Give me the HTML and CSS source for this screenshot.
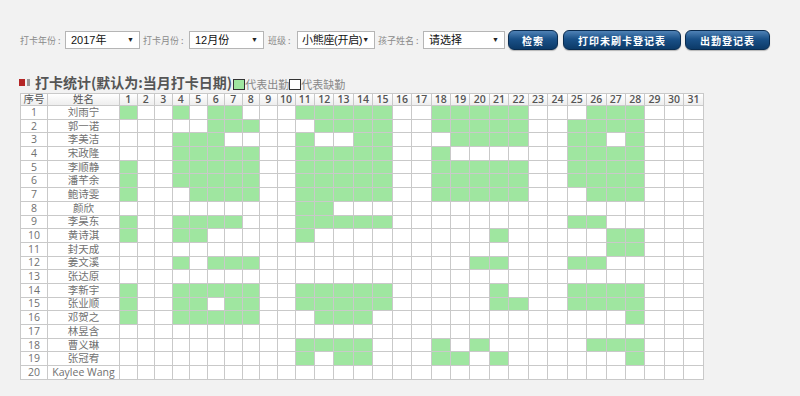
FILE: index.html
```html
<!DOCTYPE html>
<html lang="zh-CN">
<head>
    <meta charset="UTF-8">
    <title>打卡统计</title>
    <link rel="stylesheet" href="styles.css">
</head>
<body>

    <div class="toolbar">
        <label class="l-year">打卡年份 :</label>
        <div class="select w-year">2017年<span class="arrow">▼</span></div>
        <label class="l-month">打卡月份 :</label>
        <div class="select w-month">12月份<span class="arrow">▼</span></div>
        <label class="l-class">班级 :</label>
        <div class="select w-class">小熊座(开启)<span class="arrow">▼</span></div>
        <label class="l-child">孩子姓名 :</label>
        <div class="select w-child">请选择<span class="arrow">▼</span></div>
        <button class="btn b-search">检索</button>
        <button class="btn b-print">打印未刷卡登记表</button>
        <button class="btn b-list">出勤登记表</button>
    </div>

    <div class="title-bar">
        <span class="mark"></span>
        <h2>打卡统计(默认为:当月打卡日期)</h2>
        <span class="legend"><i class="box on"></i>代表出勤<i class="box"></i>代表缺勤</span>
    </div>

    <table class="grid" id="grid"></table>

    <script>
        const students = [
            { name: "刘雨宁", days: [1,4,6,7,11,12,13,14,15,18,19,20,21,22,26,27,28] },
            { name: "郭一诺", days: [6,7,8,12,13,14,15,18,19,20,21,22,25,26,27,28] },
            { name: "李美洁", days: [4,5,6,11,14,15,19,20,21,22,25,26,28] },
            { name: "宋政隆", days: [4,5,6,7,8,11,12,13,14,15,18,25,26,27,28] },
            { name: "李顺静", days: [1,4,5,6,7,8,11,12,13,14,15,18,19,20,21,22,25,26,27,28] },
            { name: "潘芊余", days: [1,4,5,6,7,8,11,12,13,14,15,18,19,20,21,22,25,26,27,28] },
            { name: "鲍诗雯", days: [1,5,6,7,8,11,12,13,14,15,18,19,20,21,22,26,27,28] },
            { name: "颜欣", days: [11,12] },
            { name: "李昊东", days: [1,4,5,6,7,11,12,13,14,15,25,26] },
            { name: "黄诗淇", days: [1,4,5,11,21,27,28] },
            { name: "封天成", days: [27,28] },
            { name: "姜文溪", days: [4,6,7,8,20,21,25,26] },
            { name: "张达原", days: [] },
            { name: "李新宇", days: [1,4,5,6,7,8,11,12,13,14,15,21,25,26,27,28] },
            { name: "张业顺", days: [1,4,5,7,8,11,12,13,14,15,21,22,25,26,27,28] },
            { name: "邓贺之", days: [1,4,5,6,7,8,12,13,14,28] },
            { name: "林昱含", days: [] },
            { name: "曹义琳", days: [11,12,13,14,18,20,26,27,28] },
            { name: "张冠宥", days: [11,13,14,18,19,21,28] },
            { name: "Kaylee Wang", days: [] }
        ];

        function colWidth(d) {
            if (d < 10) return 17.5;
            if (d === 10) return 18;
            return 19.45;
        }

        function buildGrid() {
            const table = document.getElementById('grid');
            let html = '<colgroup><col style="width:27px"><col style="width:72px">';
            for (let d = 1; d <= 31; d++) html += `<col style="width:${colWidth(d)}px">`;
            html += '</colgroup><thead><tr><th class="plain">序号</th><th class="plain">姓名</th>';
            for (let d = 1; d <= 31; d++) html += `<th>${d}</th>`;
            html += '</tr></thead><tbody>';
            students.forEach((s, index) => {
                html += `<tr><td>${index + 1}</td><td>${s.name}</td>`;
                for (let d = 1; d <= 31; d++) {
                    html += s.days.includes(d) ? '<td class="on"></td>' : '<td></td>';
                }
                html += '</tr>';
            });
            html += '</tbody>';
            table.innerHTML = html;
        }

        buildGrid();
    </script>

</body>
</html>
```

FILE: styles.css
```css
body {
    margin: 0;
    background-color: #f2f2f2;
    font-family: "Open Sans", "Noto Sans CJK SC", sans-serif;
    color: #666;
}
.toolbar {
    display: flex;
    align-items: center;
    height: 20px;
    margin: 30px 0 0 20px;
}
.toolbar label {
    font-size: 9px;
    color: #8a8a8a;
    white-space: nowrap;
    font-family: "Noto Sans CJK SC", sans-serif;
}
.l-year { width: 45px; }
.l-month { width: 46px; margin-left: 3px; }
.l-class { width: 29px; margin-left: 4px; }
.l-child { width: 45px; margin-left: 3px; }
.select {
    position: relative;
    box-sizing: border-box;
    height: 18px;
    line-height: 16px;
    padding-left: 5px;
    background-color: #fff;
    border: 1px solid #b5b5b5;
    font-size: 11px;
    color: #111;
    font-family: "Liberation Sans", "Noto Sans CJK SC", sans-serif;
    white-space: nowrap;
}
.select .arrow {
    position: absolute;
    right: 5px;
    top: 0;
    font-size: 7px;
    color: #222;
}
.w-year { width: 75px; }
.w-month { width: 75px; }
.w-class { width: 78px; padding-left: 4px; letter-spacing: -0.3px; }
.w-child { width: 82px; }
.btn {
    box-sizing: border-box;
    height: 20px;
    padding: 0;
    border: 1px solid #0a2c50;
    border-radius: 6px;
    background: linear-gradient(#4f82b6, #1a5188 45%, #0c3a68);
    color: #fff;
    font-size: 10px;
    font-weight: bold;
    letter-spacing: 1px;
    font-family: "Noto Sans CJK SC", sans-serif;
    box-shadow: 0 1px 1px rgba(0,0,0,0.25);
}
.b-search { width: 50px; margin-left: 3px; }
.b-print { width: 118px; margin-left: 5px; }
.b-list { width: 85px; margin-left: 4px; }
.title-bar {
    display: flex;
    align-items: center;
    height: 16px;
    margin: 24px 0 0 19px;
}
.mark {
    width: 6px;
    height: 7px;
    background-color: #b52626;
    border-right: 2px solid #f2f2f2;
    box-shadow: 3px 0 0 #9a9a9a;
    margin-right: 8px;
}
.title-bar h2 {
    margin: 0;
    font-size: 14px;
    font-weight: bold;
    color: #555;
    font-family: "Noto Sans CJK SC", sans-serif;
}
.legend {
    display: flex;
    align-items: center;
    font-size: 11px;
    color: #888;
    margin-left: 1px;
    margin-top: 4px;
    font-family: "Noto Sans CJK SC", sans-serif;
}
.box {
    box-sizing: border-box;
    width: 12px;
    height: 11px;
    border: 1px solid #333;
    background-color: #fff;
}
.box.on { background-color: #9fe6a0; }
.grid {
    table-layout: fixed;
    border-collapse: collapse;
    width: 683px;
    margin: 3px 0 0 20px;
    background-color: #fff;
    font-size: 10.5px;
}
.grid th,
.grid td {
    border: 1px solid #c9c9c9;
    padding: 0;
    text-align: center;
    line-height: 11px;
    white-space: nowrap;
    overflow: hidden;
}
.grid thead tr {
    height: 11px;
    background: linear-gradient(#ffffff, #ececec);
}
.grid th {
    color: #555;
    font-weight: 600;
}
.grid th.plain {
    font-weight: normal;
}
.grid td {
    color: #707070;
}
.grid tbody tr {
    height: 13.7px;
}
.grid td.on {
    background-color: #9fe6a0;
}
```
